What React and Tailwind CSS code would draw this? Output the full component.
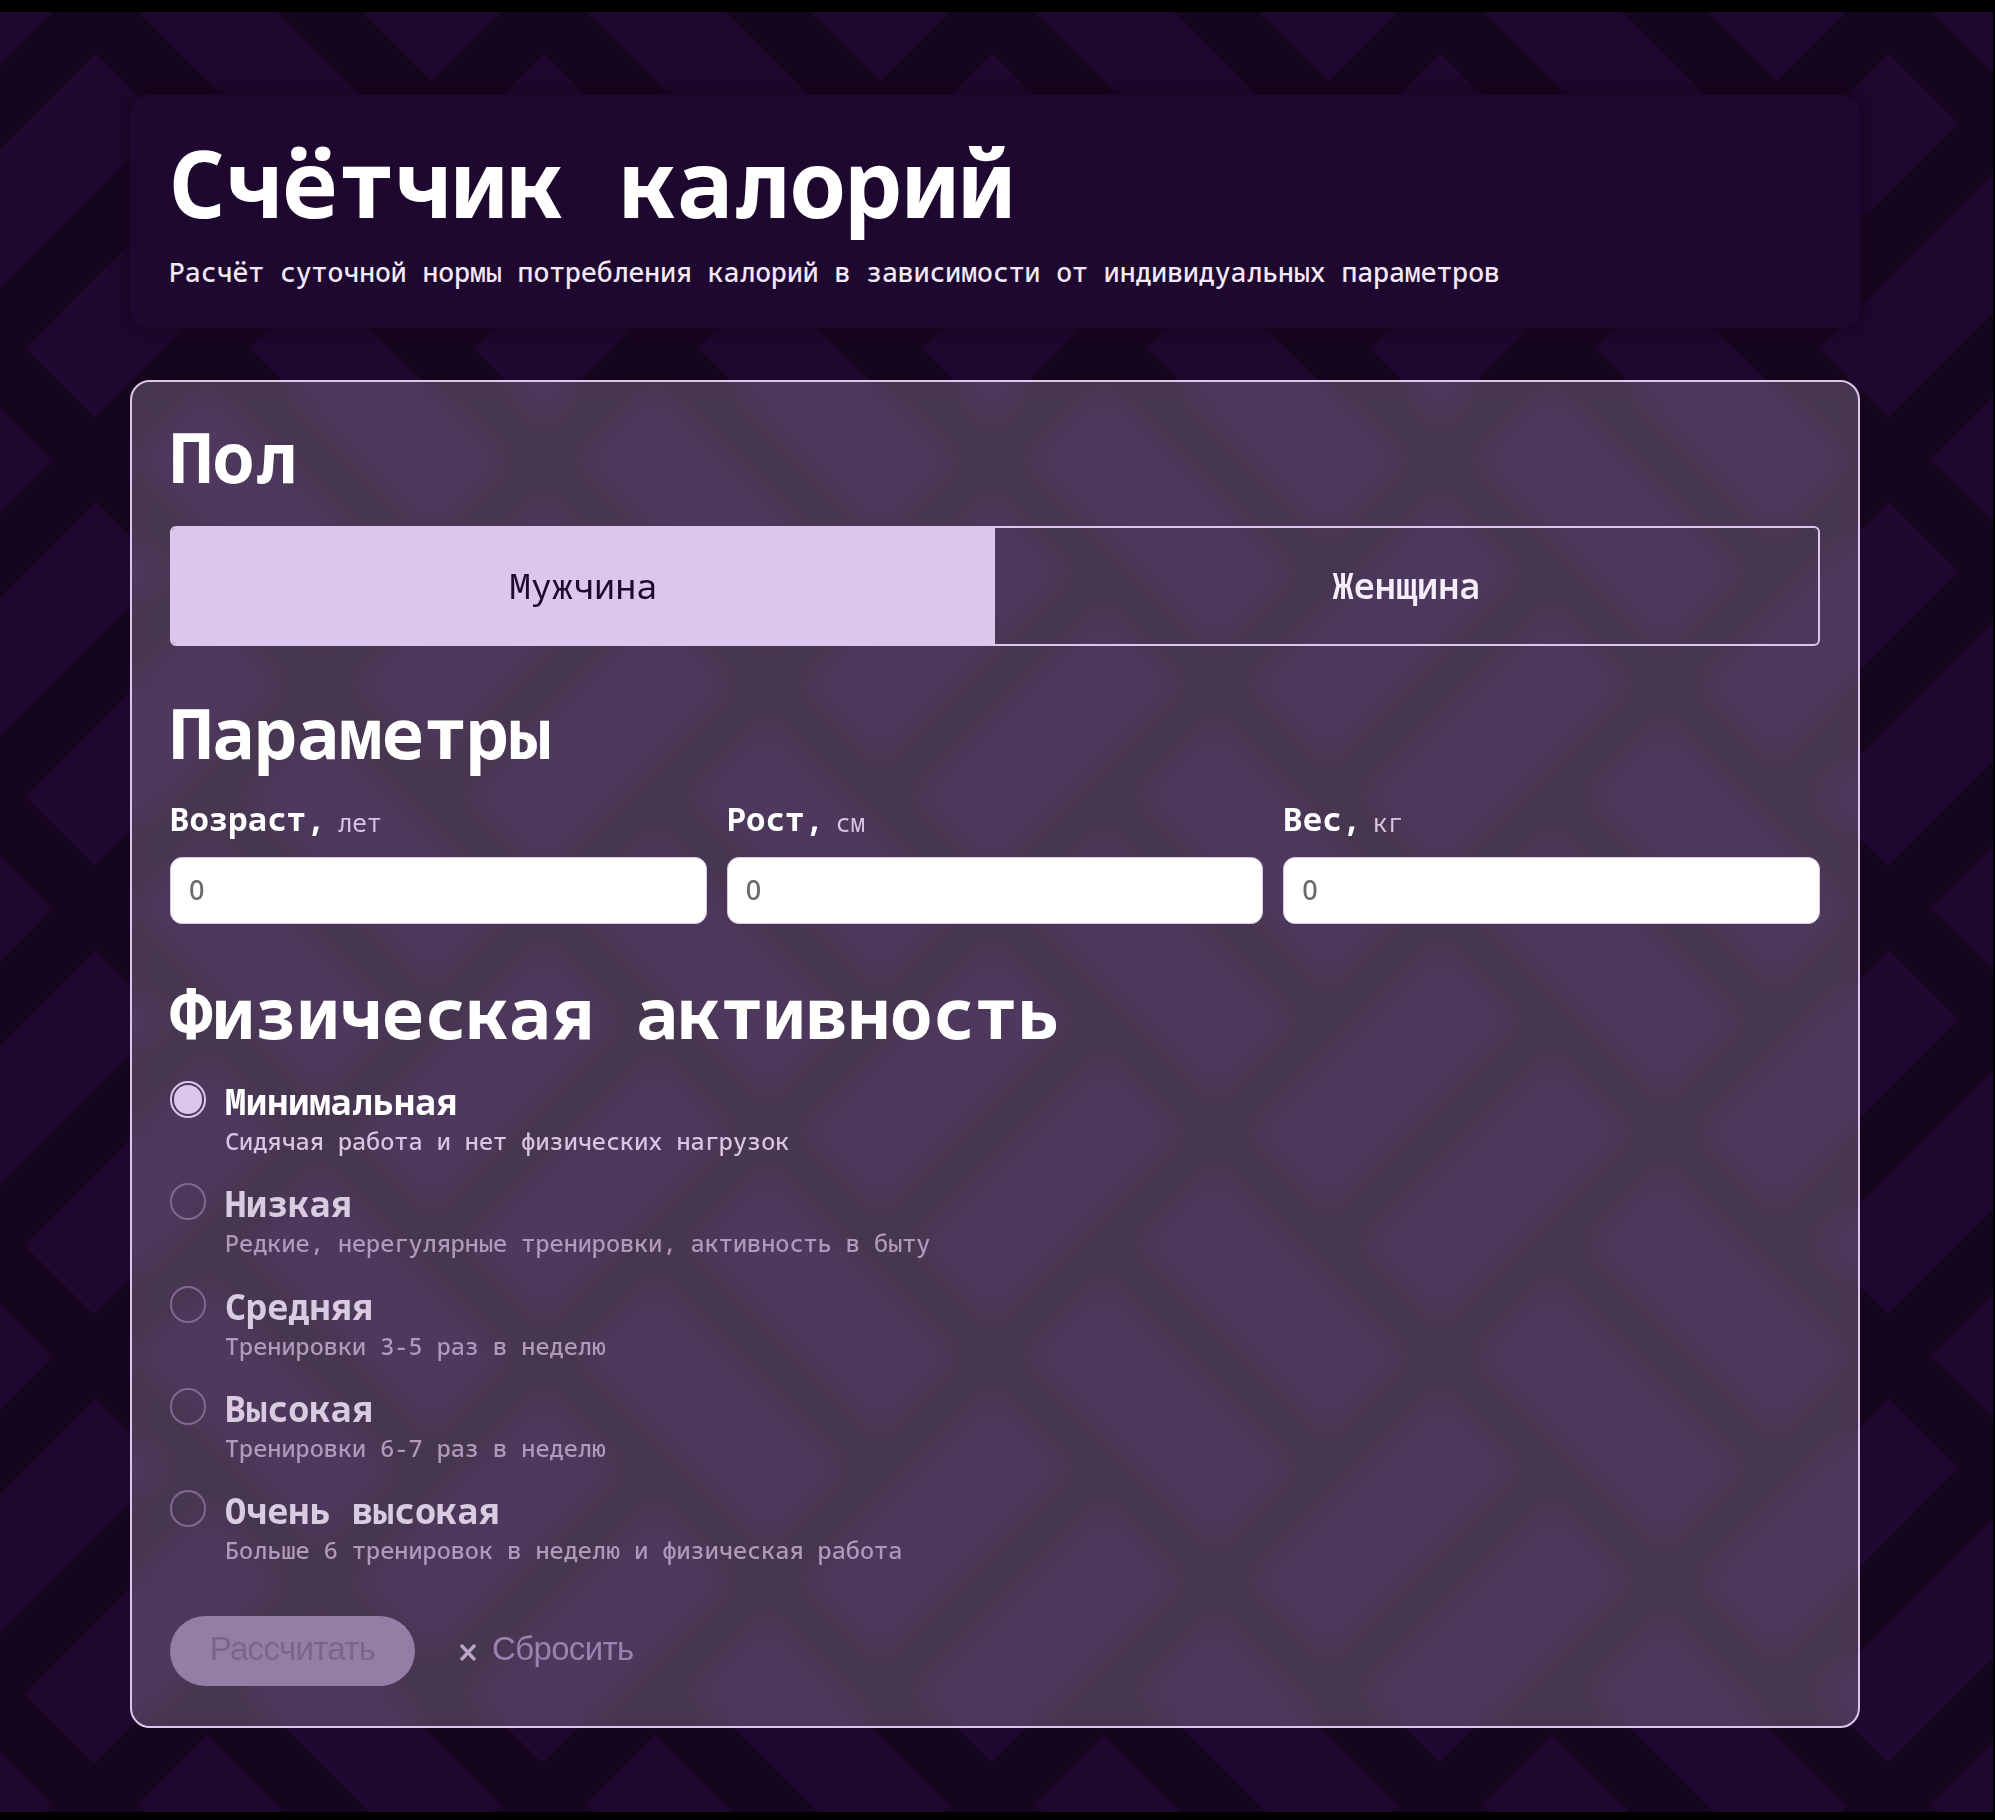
import React, { useState } from 'react';

const MONO = "font-['Noto_Sans_Mono','DejaVu_Sans_Mono',monospace]";

const FIELDS = [
  { label: 'Возраст,', unit: 'лет' },
  { label: 'Рост,', unit: 'см' },
  { label: 'Вес,', unit: 'кг' },
];

const LEVELS = [
  ['Минимальная', 'Сидячая работа и нет физических нагрузок'],
  ['Низкая', 'Редкие, нерегулярные тренировки, активность в быту'],
  ['Средняя', 'Тренировки 3-5 раз в неделю'],
  ['Высокая', 'Тренировки 6-7 раз в неделю'],
  ['Очень высокая', 'Больше 6 тренировок в неделю и физическая работа'],
];

function Brick({ x, y, angle }) {
  return <rect x="-129" y="-49" width="258" height="98" transform={`translate(${x} ${y}) rotate(${angle})`} />;
}

/* Pair of parallel bricks; pairs alternate direction to form a basket weave. */
function Pair({ x, y, rising }) {
  const d = 56.05;
  return rising ? (
    <>
      <Brick x={x - d} y={y - d} angle={-45} />
      <Brick x={x + d} y={y + d} angle={-45} />
    </>
  ) : (
    <>
      <Brick x={x + d} y={y - d} angle={45} />
      <Brick x={x - d} y={y + d} angle={45} />
    </>
  );
}

function Weave() {
  const t = 448.4;
  return (
    <svg className="absolute inset-0 h-full w-full" aria-hidden="true">
      <defs>
        <pattern id="weave" width={t} height={t} patternUnits="userSpaceOnUse" patternTransform="translate(95 223.6)">
          <g fill="#1f082f">
            <Pair x={0} y={0} rising />
            <Pair x={t} y={0} rising />
            <Pair x={0} y={t} rising />
            <Pair x={t} y={t} rising />
            <Pair x={t / 2} y={t / 2} />
          </g>
        </pattern>
      </defs>
      <rect width="100%" height="100%" fill="#16061d" />
      <rect width="100%" height="100%" fill="url(#weave)" />
    </svg>
  );
}

function Heading({ children, className = '' }) {
  return <h2 className={`text-[70.6px] leading-[80px] font-bold text-white ${className}`}>{children}</h2>;
}

export default function App() {
  const [gender, setGender] = useState(0);
  const [level, setLevel] = useState(0);

  return (
    <div className={`h-[1820px] w-[1995px] bg-black pt-3 pr-[2px] pb-2 ${MONO}`}>
      <div className="relative h-[1800px] overflow-hidden">
        <Weave />
        <main className="relative ml-[130px] w-[1730px] pt-[83px]">
          <header className="h-[233px] rounded-[18px] bg-[#1f082f] px-[39px] pt-8 shadow-[0_0_16px_2px_#16041c]">
            <h1 className="text-[94px] leading-[110px] font-bold whitespace-nowrap text-white">Счётчик калорий</h1>
            <p className="mt-[15px] text-[26.42px] leading-10 font-medium whitespace-nowrap text-[#f3e9f8]">
              Расчёт суточной нормы потребления калорий в зависимости от индивидуальных параметров
            </p>
          </header>

          <form className="mt-[52px] h-[1348px] rounded-[20px] border-2 border-[#dcc6eb] bg-[#dcc6eb]/25 px-[38px] pt-[34px] backdrop-blur-[12px]">
            <Heading>Пол</Heading>
            <div className="mt-[30px] grid h-[120px] grid-cols-2 overflow-hidden rounded-[6px] border-2 border-[#dcc6eb]">
              {['Мужчина', 'Женщина'].map((name, i) => (
                <button
                  key={name}
                  type="button"
                  onClick={() => setGender(i)}
                  className={`pb-px text-[35.2px] ${gender === i ? 'bg-[#dcc6eb] text-[#1f082f]' : 'font-semibold text-[#f6eefb]'}`}
                >
                  {name}
                </button>
              ))}
            </div>

            <Heading className="mt-[46px]">Параметры</Heading>
            <div className="mt-[26px] grid grid-cols-3 gap-5">
              {FIELDS.map(({ label, unit }) => (
                <label key={label} className="block">
                  <span className="flex h-10 text-[32.4px] leading-10 font-bold text-white">
                    {label}
                    <small className="ml-3 pt-[5px] text-[24.5px] font-normal text-[#d8c6e3]">{unit}</small>
                  </span>
                  <input
                    placeholder="0"
                    className="mt-[19px] block h-[67px] w-full rounded-xl border border-[#dcc6eb] bg-white px-[18px] pb-[2px] font-['Noto_Sans'] text-[27px] font-medium text-black outline-none placeholder:text-[#6b6b6b]"
                  />
                </label>
              ))}
            </div>

            <Heading className="mt-12 whitespace-nowrap">Физическая активность</Heading>
            <ul className="mt-[29px] flex flex-col gap-[26.3px]">
              {LEVELS.map(([title, note], i) => (
                <li key={title} className="flex h-[76px]" onClick={() => setLevel(i)}>
                  <span
                    className={`mr-[19px] flex h-[37px] w-9 shrink-0 rounded-full border-2 p-[2px] ${
                      level === i ? 'border-[#dcc6eb]' : 'border-[#806990]'
                    }`}
                  >
                    {level === i && <span className="size-full rounded-full bg-[#dcc6eb]" />}
                  </span>
                  <span className="whitespace-nowrap">
                    <span className={`block text-[35.2px] leading-10 font-bold ${level === i ? 'text-white' : 'text-[#d9cce0]'}`}>
                      {title}
                    </span>
                    <span className={`mt-1 block text-[23.53px] leading-8 font-medium ${level === i ? 'text-[#d8c6e3]' : 'text-[#ae9bba]'}`}>
                      {note}
                    </span>
                  </span>
                </li>
              ))}
            </ul>

            <div className="mt-[50px] flex h-[70px] items-center font-['Liberation_Sans',sans-serif] text-[33px] tracking-[-0.65px]">
              <button type="button" className="h-full w-[245px] rounded-full bg-[#957ea5] pb-[5px] text-[#7c648b]">
                Рассчитать
              </button>
              <button type="button" className="ml-11 flex items-center pb-[5px] text-[#9c82ae]">
                <svg viewBox="0 0 18 17" className="mt-2 mr-[15px] h-[17px] w-[18px]" fill="none" stroke="#bba6c8" strokeWidth="3.4">
                  <path d="M2 1 16 16M16 1 2 16" />
                </svg>
                Сбросить
              </button>
            </div>
          </form>
        </main>
      </div>
    </div>
  );
}
